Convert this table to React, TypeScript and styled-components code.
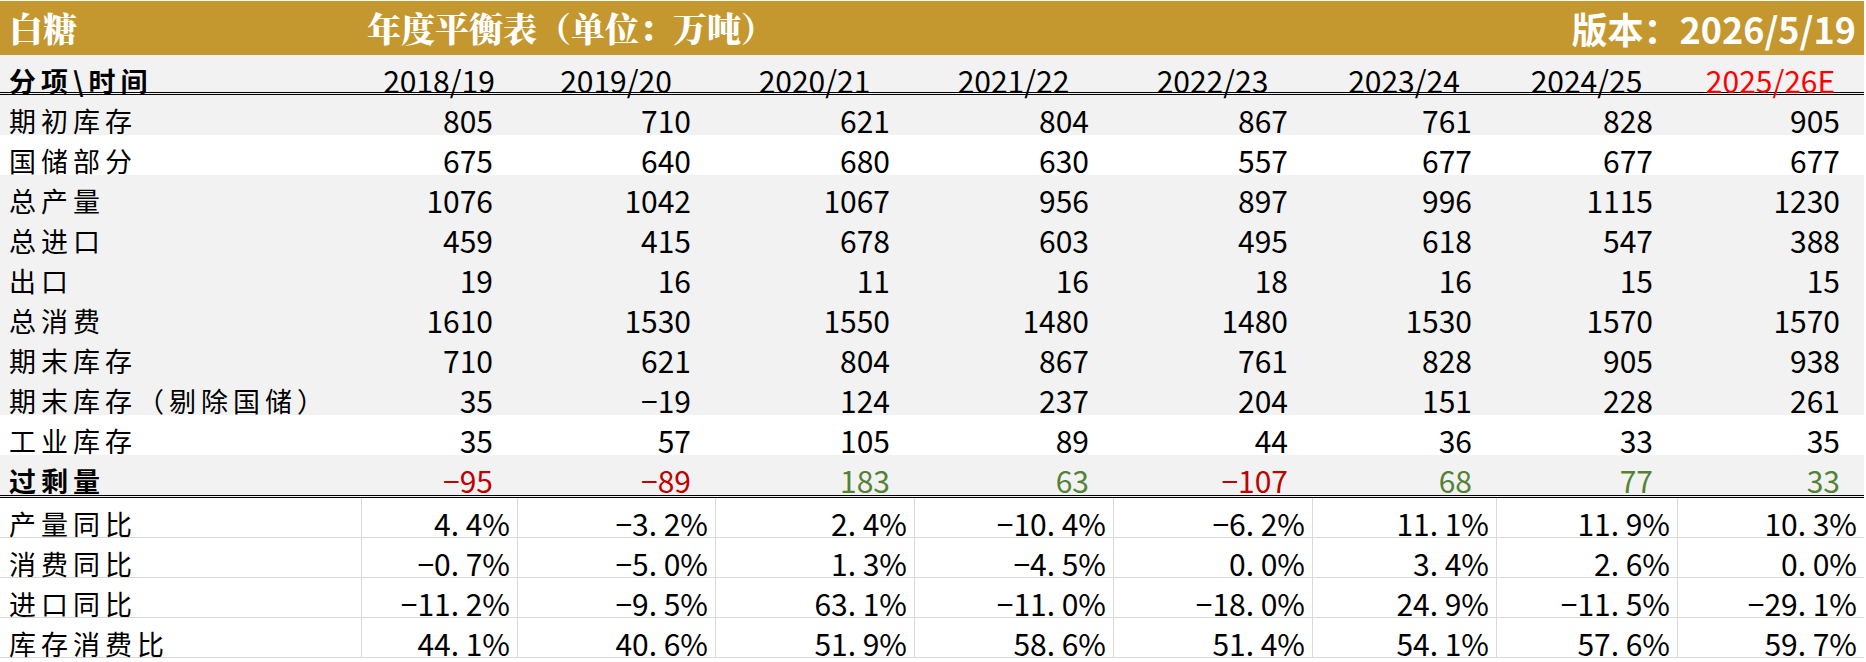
import React from "react";
import styled, { createGlobalStyle } from "styled-components";

const COLS = "361px 156px 198px 199px 199px 199px 184px 181px 187px";
const GOLD = "#C4972F";
const GRAY = "#F2F2F2";

const GlobalStyle = createGlobalStyle`
  html, body { margin: 0; padding: 0; background: #ffffff; }
  * { box-sizing: border-box; }
`;

const Page = styled.div`
  width: 1864px;
  padding-top: 1px;
  background: #ffffff;
`;

const TitleBar = styled.div`
  display: grid;
  grid-template-columns: 361px 1fr auto;
  align-items: center;
  height: 54px;
  background: ${GOLD};
  color: #ffffff;
`;

const TitleText = styled.div<{ $pad?: number }>`
  font-family: "Noto Serif CJK SC", "Noto Sans CJK SC", serif;
  font-weight: 900;
  font-size: 34px;
  line-height: 1;
  padding-left: ${(p) => p.$pad ?? 0}px;
  white-space: nowrap;
`;

const Version = styled.div`
  font-family: "Noto Sans CJK SC", sans-serif;
  font-weight: 700;
  font-size: 36px;
  line-height: 1;
  padding-right: 8px;
  white-space: nowrap;
`;

const Row = styled.div<{ $bg: string; $h?: number; $line?: string }>`
  display: grid;
  grid-template-columns: ${COLS};
  height: ${(p) => p.$h ?? 40}px;
  background: ${(p) => p.$bg};
  border-bottom: ${(p) => p.$line ?? "none"};
`;

const Label = styled.div<{ $bold?: boolean }>`
  display: flex;
  align-items: center;
  padding: 3px 0 0 9px;
  font-family: "Noto Sans CJK SC", sans-serif;
  font-size: 27px;
  font-weight: ${(p) => (p.$bold ? 700 : 400)};
  letter-spacing: 5px;
  color: #000;
  white-space: nowrap;
`;

const HeadCell = styled.div<{ $color?: string }>`
  display: flex;
  align-items: center;
  justify-content: center;
  padding-top: 3px;
  font-family: "Noto Sans CJK SC", sans-serif;
  font-variant-numeric: tabular-nums;
  font-size: 30px;
  color: ${(p) => p.$color ?? "#000"};
  white-space: nowrap;
`;

const NumCell = styled.div<{ $color?: string; $pad: number; $grid?: boolean }>`
  display: flex;
  align-items: center;
  justify-content: flex-end;
  padding: 3px ${(p) => p.$pad}px 0 0;
  font-family: "Noto Sans CJK SC", sans-serif;
  font-variant-numeric: tabular-nums;
  font-size: 30px;
  color: ${(p) => p.$color ?? "#000"};
  white-space: nowrap;
  border-left: ${(p) => (p.$grid ? "1px solid #D9D9D9" : "none")};
`;

/* half-width slot for the decimal point, as the sheet's CJK font draws it */
const Dot = styled.span`
  display: inline-block;
  width: 15px;
  text-align: left;
`;

const years = ["2018/19", "2019/20", "2020/21", "2021/22", "2022/23", "2023/24", "2024/25", "2025/26E"];

type Body = { label: string; values: number[]; white?: boolean; surplus?: boolean };

const body: Body[] = [
  { label: "期初库存", values: [805, 710, 621, 804, 867, 761, 828, 905] },
  { label: "国储部分", values: [675, 640, 680, 630, 557, 677, 677, 677], white: true },
  { label: "总产量", values: [1076, 1042, 1067, 956, 897, 996, 1115, 1230] },
  { label: "总进口", values: [459, 415, 678, 603, 495, 618, 547, 388] },
  { label: "出口", values: [19, 16, 11, 16, 18, 16, 15, 15] },
  { label: "总消费", values: [1610, 1530, 1550, 1480, 1480, 1530, 1570, 1570] },
  { label: "期末库存", values: [710, 621, 804, 867, 761, 828, 905, 938] },
  { label: "期末库存（剔除国储）", values: [35, -19, 124, 237, 204, 151, 228, 261] },
  { label: "工业库存", values: [35, 57, 105, 89, 44, 36, 33, 35], white: true },
  { label: "过剩量", values: [-95, -89, 183, 63, -107, 68, 77, 33], surplus: true },
];

const ratios: { label: string; values: string[] }[] = [
  { label: "产量同比", values: ["4.4%", "-3.2%", "2.4%", "-10.4%", "-6.2%", "11.1%", "11.9%", "10.3%"] },
  { label: "消费同比", values: ["-0.7%", "-5.0%", "1.3%", "-4.5%", "0.0%", "3.4%", "2.6%", "0.0%"] },
  { label: "进口同比", values: ["-11.2%", "-9.5%", "63.1%", "-11.0%", "-18.0%", "24.9%", "-11.5%", "-29.1%"] },
  { label: "库存消费比", values: ["44.1%", "40.6%", "51.9%", "58.6%", "51.4%", "54.1%", "57.6%", "59.7%"] },
];

const fmt = (n: number) => (n < 0 ? "\u2212" + Math.abs(n) : String(n));

function Pct({ value }: { value: string }) {
  const [int, dec] = value.replace("-", "\u2212").split(".");
  return (
    <>
      {int}
      <Dot>.</Dot>
      {dec}
    </>
  );
}

export default function App() {
  return (
    <>
      <GlobalStyle />
      <Page>
        <TitleBar>
          <TitleText $pad={9}>白糖</TitleText>
          <TitleText $pad={6}>年度平衡表（单位：万吨）</TitleText>
          <Version>版本：2026/5/19</Version>
        </TitleBar>

        <Row $bg={GRAY} $line="3px double #000">
          <Label $bold>分项\时间</Label>
          {years.map((y, i) => (
            <HeadCell key={y} $color={i === years.length - 1 ? "#FF0000" : undefined}>
              {y}
            </HeadCell>
          ))}
        </Row>

        {body.map((r) => (
          <Row
            key={r.label}
            $bg={r.white ? "#FFFFFF" : GRAY}
            $line={r.surplus ? "3px double #000" : undefined}
            $h={r.surplus ? 43 : 40}
          >
            <Label $bold={r.surplus}>{r.label}</Label>
            {r.values.map((v, i) => (
              <NumCell
                key={i}
                $pad={24}
                $color={r.surplus ? (v < 0 ? "#C00000" : "#548235") : undefined}
              >
                {fmt(v)}
              </NumCell>
            ))}
          </Row>
        ))}

        {ratios.map((r) => (
          <Row key={r.label} $bg="#FFFFFF" $line="1px solid #D9D9D9">
            <Label>{r.label}</Label>
            {r.values.map((v, i) => (
              <NumCell key={i} $pad={7} $grid>
                <Pct value={v} />
              </NumCell>
            ))}
          </Row>
        ))}
      </Page>
    </>
  );
}
